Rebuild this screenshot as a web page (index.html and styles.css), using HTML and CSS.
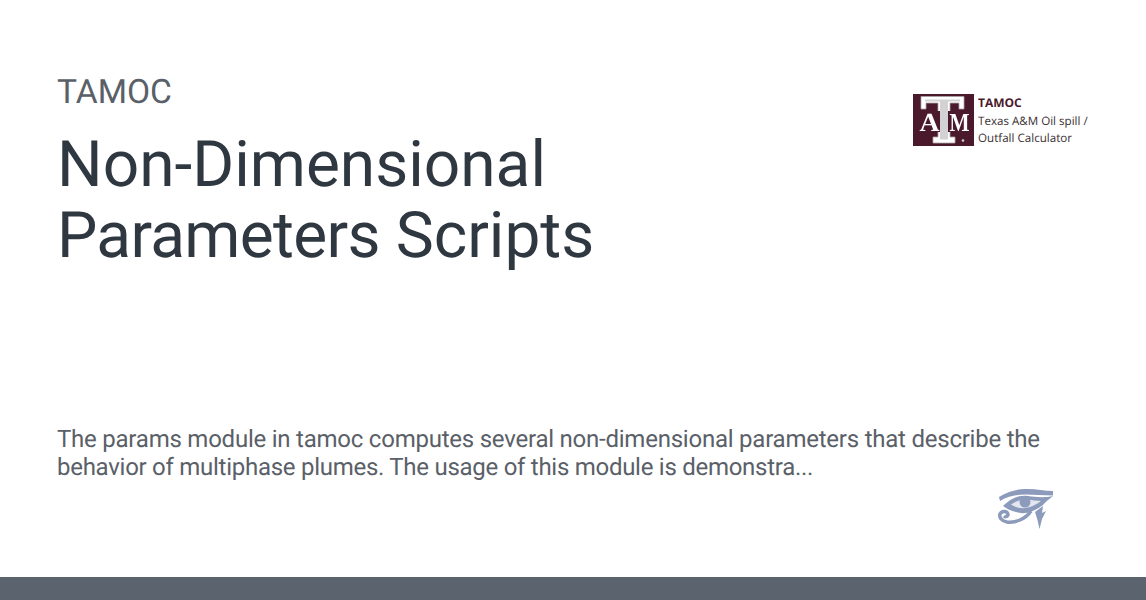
FILE: index.html
```html
<!DOCTYPE html>
<html lang="en">
<head>
<meta charset="utf-8">
<title>Non-Dimensional Parameters Scripts</title>
<link rel="stylesheet" href="styles.css">
</head>
<body>
<main class="card">
  <header class="head">
    <div class="titles">
      <div class="site">TAMOC</div>
      <h1 class="title">Non-Dimensional <span class="tight">Parameters</span> Scripts</h1>
    </div>
    <div class="logo">
      <svg class="logo-mark" width="61" height="52" viewBox="0 0 61 52">
        <rect width="61" height="52" fill="#4a1a2c"/>
        <path d="M8 2.500H51V15H46V9H37V43H42V49H20V43H25V9H13V15H8Z" fill="#fff" stroke="#a9a4a6" stroke-width=".8"/>
        <path d="M12 5.500H47V7.500H35V45.500H27V7.500H12Z" fill="#d4d1d2"/>
        <rect x="5" y="17" width="22" height="21" fill="#4a1a2c"/>
        <rect x="35" y="17" width="22" height="21" fill="#4a1a2c"/>
        <text class="logo-letter" x="6.500" y="36.500" textLength="20" lengthAdjust="spacingAndGlyphs">A</text>
        <text class="logo-letter" x="36.500" y="36.500" textLength="20" lengthAdjust="spacingAndGlyphs">M</text>
        <circle cx="50" cy="46.500" r="1.300" fill="#d8d0d4"/>
      </svg>
      <div class="logo-text">
        <div class="logo-name">TAMOC</div>
        <div class="logo-line">Texas A&amp;M Oil spill /</div>
        <div class="logo-line">Outfall Calculator</div>
      </div>
    </div>
  </header>
  <p class="desc">The params module in tamoc computes several non-dimensional parameters that describe the <span class="tight-line">behavior of multiphase plumes. The usage of this module is demonstra...</span></p>
  <div class="foot">
    <svg class="eye" width="56" height="40" viewBox="0 0 56 40" fill="none">
      <path d="M1 8C10 2 20 0 30 0C38 0 47 2 55 2V6.500C45 6.500 36 5.500 28 5.500C18 5.500 9 7.500 2 12Z" fill="#8c9abb"/>
      <path d="M5 17C14 8 22 6 30 7C38 8 46 9 55 7C50 11 47 13 45 16C36 23 26 26 18 23C13 22 9 20 5 17Z" fill="#8c9abb"/>
      <path d="M13 15.500C18 12 24 10 30 10.500C34 11 39 12 43 12C40 14 36 17 30 18.500C24 20 18 19 13 15.500Z" fill="#e3e6ee"/>
      <circle cx="27" cy="13" r="5.500" fill="#8c9abb"/>
      <path d="M33 22C27 31 16 34 9 33C3 32 1 28 2 25C4 21 10 22 10 26C9 28 7 28 6 27" stroke="#8c9abb" stroke-width="3.500"/>
      <path d="M37 23L45 17L44 24L48 22L44 30L41.500 40L39.500 31Z" fill="#8c9abb"/>
    </svg>
  </div>
</main>
<div class="bar"></div>
</body>
</html>
```
FILE: styles.css
```css
* { box-sizing: border-box; }
html, body { margin: 0; height: 100%; }
body {
  width: 1146px;
  height: 600px;
  overflow: hidden;
  background: #fff;
  font-family: Roboto, "Liberation Sans", sans-serif;
  text-rendering: geometricPrecision;
  display: flex;
  flex-direction: column;
}
.card {
  flex: 1;
  display: flex;
  flex-direction: column;
  padding: 73px 58px 0 57px;
}
.head {
  display: flex;
  justify-content: space-between;
  align-items: flex-start;
  height: 352px;
}
.titles { width: 600px; }
.site {
  font-size: 33.600px;
  line-height: 40px;
  color: #5a6068;
}
.title {
  margin: 16px 0 0;
  font-size: 64px;
  font-weight: 400;
  line-height: 71px;
  color: #2f3740;
}
.tight { letter-spacing: -0.700px; }
.logo {
  display: flex;
  gap: 4px;
  margin-top: 21px;
  width: 175px;
}
.logo-mark { flex: none; filter: blur(0.300px); }
.logo-letter {
  font-family: "Liberation Serif", serif;
  font-weight: 700;
  font-size: 26px;
  fill: #fff;
}
.logo-text {
  font-family: "Open Sans", sans-serif;
  font-size: 11.600px;
  line-height: 17px;
  color: #3b3034;
  white-space: nowrap;
}
.logo-name { font-size: 12px; line-height: 20px; font-weight: 700; color: #4a1a2c; margin-top: -1px; }
.desc {
  margin: 0;
  font-size: 24px;
  letter-spacing: -0.230px;
  line-height: 28px;
  color: #5a6068;
  width: 1000px;
}
.tight-line { letter-spacing: -0.270px; }
.foot {
  display: flex;
  justify-content: flex-end;
  padding: 8px 34px 0 0;
}
.eye { display: block; filter: blur(0.400px); }
.bar { height: 23px; flex: none; background: #5a636e; }
```
